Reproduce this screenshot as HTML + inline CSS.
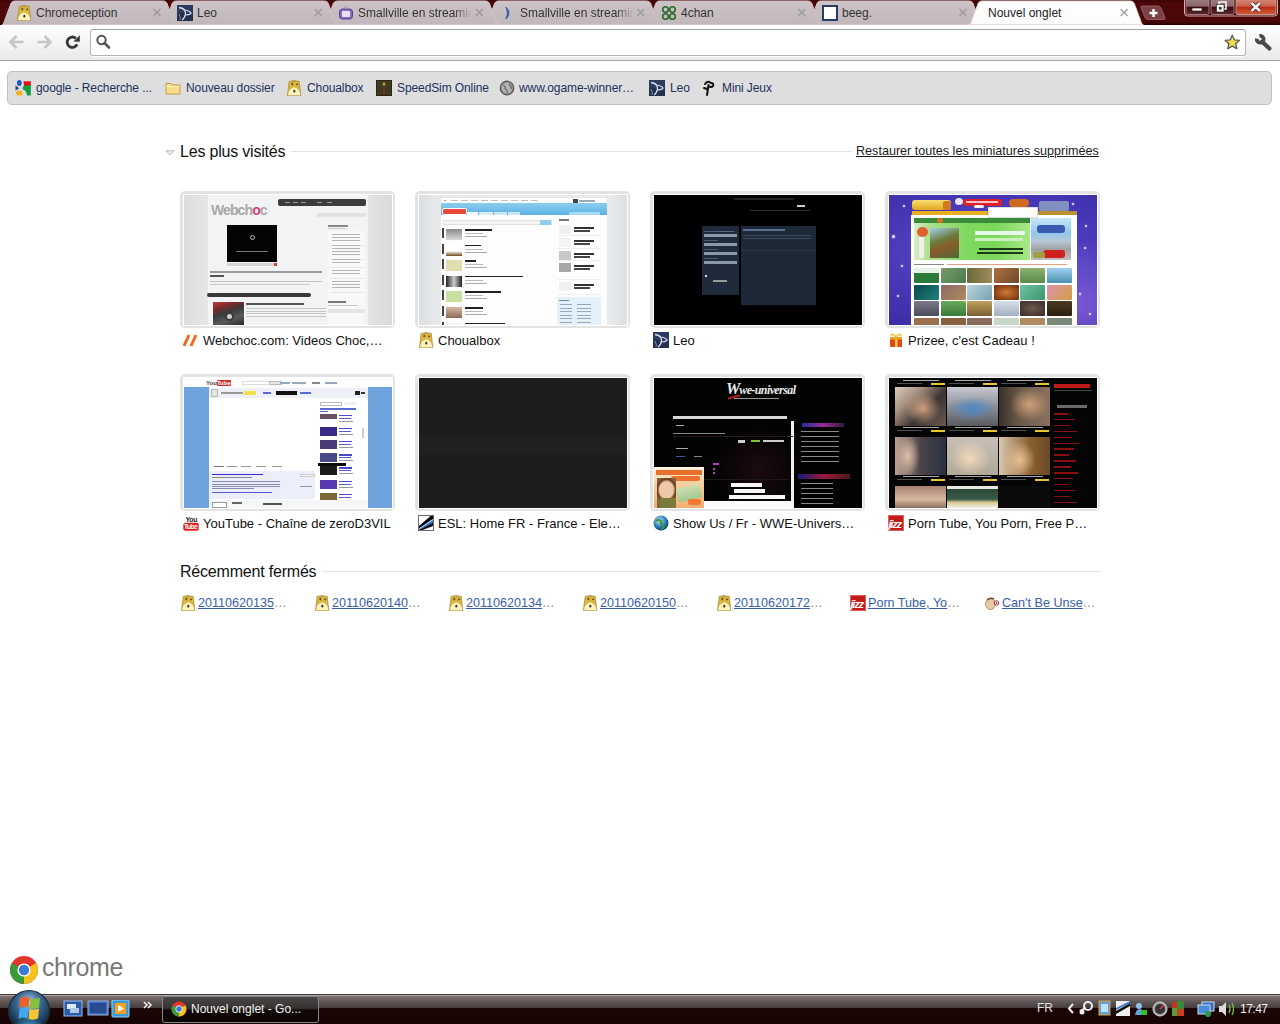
<!DOCTYPE html>
<html><head><meta charset="utf-8"><title>Nouvel onglet</title>
<style>
html,body{margin:0;padding:0;width:1280px;height:1024px;overflow:hidden;background:#fff;font-family:"Liberation Sans",sans-serif;position:relative}
div{box-sizing:border-box}
</style></head><body>
<svg style="position:absolute;left:0;top:0" width="1280" height="25">
<defs><linearGradient id="tg" x1="0" y1="0" x2="0" y2="1"><stop offset="0" stop-color="#cdc3c6"/><stop offset="1" stop-color="#c0b8bb"/></linearGradient><linearGradient id="ag" x1="0" y1="0" x2="0" y2="1"><stop offset="0" stop-color="#ffffff"/><stop offset="1" stop-color="#fbfbfb"/></linearGradient><linearGradient id="fg" x1="0" y1="0" x2="0" y2="1"><stop offset="0" stop-color="#3e0406"/><stop offset="0.15" stop-color="#4c0709"/><stop offset="0.85" stop-color="#4a0708"/><stop offset="1" stop-color="#2a0203"/></linearGradient></defs>
<rect x="0" y="0" width="1280" height="25" fill="url(#fg)"/>
<path d="M808.0,24.5 C809.5,24.5 810.0,22.5 810.6,20.5 L816.2,5.5 Q817.2,1.0 821.0,1.0 L969.0,1.0 Q972.8,1.0 973.8,5.5 L979.4,20.5 C980.0,22.5 980.5,24.5 982.0,24.5 Z" fill="url(#tg)" stroke="#d7c2c6" stroke-width="1"/>
<path d="M646.8,24.5 C648.3,24.5 648.8,22.5 649.4,20.5 L655.0,5.5 Q656.0,1.0 659.8,1.0 L807.8,1.0 Q811.6,1.0 812.6,5.5 L818.2,20.5 C818.8,22.5 819.3,24.5 820.8,24.5 Z" fill="url(#tg)" stroke="#d7c2c6" stroke-width="1"/>
<path d="M485.6,24.5 C487.1,24.5 487.6,22.5 488.2,20.5 L493.8,5.5 Q494.8,1.0 498.6,1.0 L646.6,1.0 Q650.4,1.0 651.4,5.5 L657.0,20.5 C657.6,22.5 658.1,24.5 659.6,24.5 Z" fill="url(#tg)" stroke="#d7c2c6" stroke-width="1"/>
<path d="M324.4,24.5 C325.9,24.5 326.4,22.5 327.0,20.5 L332.6,5.5 Q333.6,1.0 337.4,1.0 L485.4,1.0 Q489.2,1.0 490.2,5.5 L495.8,20.5 C496.4,22.5 496.9,24.5 498.4,24.5 Z" fill="url(#tg)" stroke="#d7c2c6" stroke-width="1"/>
<path d="M163.2,24.5 C164.7,24.5 165.2,22.5 165.8,20.5 L171.4,5.5 Q172.4,1.0 176.2,1.0 L324.2,1.0 Q328.0,1.0 329.0,5.5 L334.6,20.5 C335.2,22.5 335.7,24.5 337.2,24.5 Z" fill="url(#tg)" stroke="#d7c2c6" stroke-width="1"/>
<path d="M2.0,24.5 C3.5,24.5 4.0,22.5 4.6,20.5 L10.2,5.5 Q11.2,1.0 15.0,1.0 L163.0,1.0 Q166.8,1.0 167.8,5.5 L173.4,20.5 C174.0,22.5 174.5,24.5 176.0,24.5 Z" fill="url(#tg)" stroke="#d7c2c6" stroke-width="1"/>
<path d="M969.2,24.5 C970.7,24.5 971.2,22.5 971.8,20.5 L977.4,5.5 Q978.4,1.0 982.2,1.0 L1130.2,1.0 Q1134.0,1.0 1135.0,5.5 L1140.6,20.5 C1141.2,22.5 1141.7,24.5 1143.2,24.5 Z" fill="url(#ag)" stroke="#e8dcdc" stroke-width="1"/>
<path d="M1142,6 L1158,6 Q1160,6 1161,8 L1165,17.5 Q1165.5,19.5 1163.5,19.5 L1148,19.5 Q1146,19.5 1145,17.5 L1141,8 Q1140.5,6 1142,6 Z" fill="#7a4246" stroke="#9a6a6e" stroke-width="0.8"/>
<path d="M1153.5,9 V17 M1149.5,13 H1157.5" stroke="#fff" stroke-width="2.4"/>
<path d="M153.5,9.0 L160.5,16.0 M160.5,9.0 L153.5,16.0" stroke="#9c9c9c" stroke-width="1.6"/>
<path d="M314.7,9.0 L321.7,16.0 M321.7,9.0 L314.7,16.0" stroke="#9c9c9c" stroke-width="1.6"/>
<path d="M475.9,9.0 L482.9,16.0 M482.9,9.0 L475.9,16.0" stroke="#9c9c9c" stroke-width="1.6"/>
<path d="M637.0999999999999,9.0 L644.0999999999999,16.0 M644.0999999999999,9.0 L637.0999999999999,16.0" stroke="#9c9c9c" stroke-width="1.6"/>
<path d="M798.3,9.0 L805.3,16.0 M805.3,9.0 L798.3,16.0" stroke="#9c9c9c" stroke-width="1.6"/>
<path d="M959.5,9.0 L966.5,16.0 M966.5,9.0 L959.5,16.0" stroke="#9c9c9c" stroke-width="1.6"/>
<path d="M1120.6999999999998,9.0 L1127.6999999999998,16.0 M1127.6999999999998,9.0 L1120.6999999999998,16.0" stroke="#a8a8a8" stroke-width="1.6"/>
<rect x="1184.5" y="-3" width="93" height="19" rx="3" fill="#3a0506" stroke="#d9a9ac" stroke-width="1"/>
<defs><linearGradient id="wb" x1="0" y1="0" x2="0" y2="1"><stop offset="0" stop-color="#a08084"/><stop offset="0.5" stop-color="#8a6468"/><stop offset="0.55" stop-color="#3a0a0e"/><stop offset="1" stop-color="#5a2a2e"/></linearGradient><linearGradient id="wc" x1="0" y1="0" x2="0" y2="1"><stop offset="0" stop-color="#d89080"/><stop offset="0.5" stop-color="#c8604c"/><stop offset="0.55" stop-color="#b82a10"/><stop offset="1" stop-color="#d06040"/></linearGradient></defs>
<rect x="1186" y="-2" width="23" height="16.5" rx="1.5" fill="url(#wb)" stroke="#c09094" stroke-width="0.8"/>
<rect x="1211" y="-2" width="23" height="16.5" rx="1.5" fill="url(#wb)" stroke="#c09094" stroke-width="0.8"/>
<rect x="1236" y="-2" width="40" height="16.5" rx="1.5" fill="url(#wc)" stroke="#e0a8a0" stroke-width="0.8"/>
<rect x="1192" y="8" width="10" height="3" fill="#f4f0f0" stroke="#2a0a0a" stroke-width="0.6"/>
<rect x="1219" y="2" width="7" height="7" fill="none" stroke="#f0f0f0" stroke-width="1.6"/>
<rect x="1216.5" y="4.5" width="7.5" height="7.5" fill="#f4f4f4" stroke="#222" stroke-width="0.6"/><rect x="1219" y="7" width="2.6" height="2.6" fill="#333"/>
<path d="M1251.5,3 L1260,11 M1260,3 L1251.5,11" stroke="#3a1010" stroke-width="4"/><path d="M1251.5,3 L1260,11 M1260,3 L1251.5,11" stroke="#f6f6ff" stroke-width="2.6"/>
</svg>
<svg style="position:absolute;left:16px;top:5px;width:16px;height:16px" viewBox="0 0 16 16"><path d="M3.2,1.2 L13.2,1.2 L14.8,15.6 L1.4,15.6 Z" fill="#d8b440" stroke="#a88a30" stroke-width="0.7" stroke-linejoin="round"/><path d="M5.5,1.2 Q8,0 10.5,1.2" stroke="#a88a30" stroke-width="0.8" fill="none"/><path d="M2,15.2 Q2.5,8.5 8.2,7.2 Q14,8.5 14.4,15.2 Z" fill="#fbf2c0"/><ellipse cx="6.3" cy="4" rx="0.9" ry="1.2" fill="#6a4a10"/><ellipse cx="11.2" cy="4.3" rx="1" ry="0.9" fill="#6a4a10"/><ellipse cx="8.3" cy="11.2" rx="1" ry="1.4" fill="#3a3020"/></svg>
<div style="position:absolute;left:36px;top:5px;width:116px;height:16px;overflow:hidden;font-size:12px;line-height:16px;color:#333;white-space:nowrap;">Chromeception</div>
<svg style="position:absolute;left:177px;top:5px;width:16px;height:16px" viewBox="0 0 16 16"><rect width="16" height="16" fill="#2c3a5e"/><rect x="0" y="8" width="16" height="8" fill="#23304e"/><path d="M2,2.5 Q9,3.5 8.5,9 Q8,13 5,15" stroke="#d8e0f0" stroke-width="1.3" fill="none"/><path d="M8.5,5 Q14.5,6.5 14,8.5 Q12,10 8.5,10" stroke="#d8e0f0" stroke-width="1.2" fill="none"/><path d="M2,9 Q4,13 3,15" stroke="#8090b0" stroke-width="1" fill="none"/></svg>
<div style="position:absolute;left:197px;top:5px;width:116px;height:16px;overflow:hidden;font-size:12px;line-height:16px;color:#333;white-space:nowrap;">Leo</div>
<svg style="position:absolute;left:338px;top:5px;width:16px;height:16px" viewBox="0 0 16 16"><rect x="1.5" y="4" width="13" height="10" rx="3" fill="#8a6cc0" stroke="#5a3e90"/><rect x="4" y="6" width="8" height="6" rx="1" fill="#e8e0f4"/><path d="M6,1 L8,4 L10,1" stroke="#a090c0" fill="none"/></svg>
<div style="position:absolute;left:358px;top:5px;width:116px;height:16px;overflow:hidden;font-size:12px;line-height:16px;color:#333;white-space:nowrap;-webkit-mask-image:linear-gradient(90deg,#000 0,#000 calc(100% - 20px),rgba(0,0,0,0) calc(100% - 2px));">Smallville en streaming</div>
<svg style="position:absolute;left:500px;top:5px;width:16px;height:16px" viewBox="0 0 16 16"><path d="M6,2 Q12,8 6,14 Q9,8 6,2 Z" fill="#3a6ac8" stroke="#2a4a98" stroke-width="0.8"/></svg>
<div style="position:absolute;left:520px;top:5px;width:116px;height:16px;overflow:hidden;font-size:12px;line-height:16px;color:#333;white-space:nowrap;-webkit-mask-image:linear-gradient(90deg,#000 0,#000 calc(100% - 20px),rgba(0,0,0,0) calc(100% - 2px));">Smallville en streaming</div>
<svg style="position:absolute;left:661px;top:5px;width:16px;height:16px" viewBox="0 0 16 16"><g fill="none" stroke="#2a6a2a" stroke-width="1.6"><circle cx="4.5" cy="4.5" r="2.8"/><circle cx="11.5" cy="4.5" r="2.8"/><circle cx="4.5" cy="11.5" r="2.8"/><circle cx="11.5" cy="11.5" r="2.8"/></g></svg>
<div style="position:absolute;left:681px;top:5px;width:116px;height:16px;overflow:hidden;font-size:12px;line-height:16px;color:#333;white-space:nowrap;">4chan</div>
<svg style="position:absolute;left:822px;top:5px;width:16px;height:16px" viewBox="0 0 16 16"><rect x="1" y="1" width="14" height="14" fill="#fff" stroke="#2a3a6a" stroke-width="2"/></svg>
<div style="position:absolute;left:842px;top:5px;width:116px;height:16px;overflow:hidden;font-size:12px;line-height:16px;color:#333;white-space:nowrap;">beeg.</div>
<div style="position:absolute;left:988px;top:5px;width:131px;height:16px;overflow:hidden;font-size:12px;line-height:16px;color:#222;white-space:nowrap;">Nouvel onglet</div>
<div style="position:absolute;left:0;top:25px;width:1280px;height:36px;background:linear-gradient(#ffffff,#f7f7f7 40%,#e9e9e9);border-bottom:1px solid #a6a6a6"></div>
<div style="position:absolute;left:90px;top:29px;width:1156px;height:27px;background:#fff;border:1px solid #b4b4b4;border-top-color:#a0a0a0;border-radius:3px;box-shadow:0 1px 0 rgba(255,255,255,.8)"></div>
<svg style="position:absolute;left:0;top:25px" width="130" height="36"><path d="M23.5,17 H11 M16.5,11 L10.5,17 L16.5,23" stroke="#c6c6c6" stroke-width="2.6" fill="none" stroke-linejoin="miter"/><path d="M37.5,17 H50 M44.5,11 L50.5,17 L44.5,23" stroke="#c6c6c6" stroke-width="2.6" fill="none"/><path d="M77.1,19.4 A5.2,5.2 0 1 1 75.9,13.4" stroke="#383838" stroke-width="2.8" fill="none"/><path d="M79.8,10.3 L79.8,16.7 L73.4,16.6 Z" fill="#383838"/><circle cx="101.5" cy="15" r="4.2" stroke="#555" stroke-width="2" fill="none"/><path d="M104.5,18 L109,22.5" stroke="#555" stroke-width="2.6" stroke-linecap="round"/></svg>
<svg style="position:absolute;left:1222px;top:32px" width="20" height="20" viewBox="0 0 20 20"><g transform="translate(10.3,10.4) scale(0.88) translate(-10,-10)"><path d="M10,1.8 L12.4,7.2 L18.2,7.6 L13.8,11.4 L15.2,17.2 L10,14.2 L4.8,17.2 L6.2,11.4 L1.8,7.6 L7.6,7.2 Z" fill="#f0dc50" stroke="#5a5a5a" stroke-width="1.5" stroke-linejoin="round"/></g></svg>
<svg style="position:absolute;left:1253px;top:32px" width="20" height="20" viewBox="0 0 20 20"><path d="M9.2,9.7 L16.4,16.6" stroke="#4a4a4a" stroke-width="4.2" stroke-linecap="round"/><path d="M6.4,4.0 A3.4,3.4 0 1 1 3.9,6.6" stroke="#4a4a4a" stroke-width="3.8" fill="none"/></svg>
<div style="position:absolute;left:7px;top:71px;width:1265px;height:34px;background:#dedede;border:1px solid #c0c0c0;border-radius:5px"></div>
<svg style="position:absolute;left:15px;top:80px;width:16px;height:16px" viewBox="0 0 16 16"><ellipse cx="4.3" cy="3.1" rx="2.4" ry="3" fill="#1a5ac8"/><path d="M8.5,1.3 H15.8 V6 H9 Z" fill="#e01414"/><path d="M9,5.6 H15.8 V15.6 H12.2 Q11.4,12.5 10.4,10.8 Q7.2,9.6 7.6,8 Q8.2,6.6 9,5.6 Z" fill="#10a040"/><path d="M0.5,5.6 L4.2,8.2 L0.5,10.4 Z" fill="#2a3a7a"/><ellipse cx="4.3" cy="13" rx="3.4" ry="2.6" fill="#f0b020"/></svg>
<div style="position:absolute;left:36px;top:81px;font-size:12px;line-height:14px;color:#22305c;white-space:nowrap;letter-spacing:-0.1px">google - Recherche ...</div>
<svg style="position:absolute;left:165px;top:80px;width:16px;height:16px" viewBox="0 0 16 16"><path d="M1,3.5 L6,3.5 L7,5 L15,5 L15,14 L1,14 Z" fill="#f6dc8c" stroke="#b89440" stroke-width="0.9"/><path d="M1.5,6.5 L14.5,6.5" stroke="#fff2c0"/></svg>
<div style="position:absolute;left:186px;top:81px;font-size:12px;line-height:14px;color:#22305c;white-space:nowrap;letter-spacing:-0.1px">Nouveau dossier</div>
<svg style="position:absolute;left:286px;top:80px;width:16px;height:16px" viewBox="0 0 16 16"><path d="M3.2,1.2 L13.2,1.2 L14.8,15.6 L1.4,15.6 Z" fill="#d8b440" stroke="#a88a30" stroke-width="0.7" stroke-linejoin="round"/><path d="M5.5,1.2 Q8,0 10.5,1.2" stroke="#a88a30" stroke-width="0.8" fill="none"/><path d="M2,15.2 Q2.5,8.5 8.2,7.2 Q14,8.5 14.4,15.2 Z" fill="#fbf2c0"/><ellipse cx="6.3" cy="4" rx="0.9" ry="1.2" fill="#6a4a10"/><ellipse cx="11.2" cy="4.3" rx="1" ry="0.9" fill="#6a4a10"/><ellipse cx="8.3" cy="11.2" rx="1" ry="1.4" fill="#3a3020"/></svg>
<div style="position:absolute;left:307px;top:81px;font-size:12px;line-height:14px;color:#22305c;white-space:nowrap;letter-spacing:-0.1px">Choualbox</div>
<svg style="position:absolute;left:376px;top:80px;width:16px;height:16px" viewBox="0 0 16 16"><rect width="16" height="16" fill="#2a2418"/><rect x="1" y="1" width="14" height="14" fill="#3e3a20"/><path d="M8,3 L9,14 L7,14 Z" fill="#9a2a1a"/><circle cx="8" cy="4" r="1.5" fill="#c8a040"/></svg>
<div style="position:absolute;left:397px;top:81px;font-size:12px;line-height:14px;color:#22305c;white-space:nowrap;letter-spacing:-0.1px">SpeedSim Online</div>
<svg style="position:absolute;left:499px;top:80px;width:16px;height:16px" viewBox="0 0 16 16"><circle cx="8" cy="8" r="6.8" fill="#8c8c8c" stroke="#5a5a5a" stroke-width="1.2"/><circle cx="8" cy="8" r="5.2" fill="#b4b4b4"/><path d="M4,5 Q7,6 6,9 Q9,10 8,13 M10,3.5 Q12,6 12.5,9" stroke="#6a6a6a" stroke-width="1.3" fill="none"/></svg>
<div style="position:absolute;left:519px;top:81px;font-size:12px;line-height:14px;color:#22305c;white-space:nowrap;letter-spacing:-0.1px">www.ogame-winner…</div>
<svg style="position:absolute;left:649px;top:80px;width:16px;height:16px" viewBox="0 0 16 16"><rect width="16" height="16" fill="#2c3a5e"/><rect x="0" y="8" width="16" height="8" fill="#23304e"/><path d="M2,2.5 Q9,3.5 8.5,9 Q8,13 5,15" stroke="#d8e0f0" stroke-width="1.3" fill="none"/><path d="M8.5,5 Q14.5,6.5 14,8.5 Q12,10 8.5,10" stroke="#d8e0f0" stroke-width="1.2" fill="none"/><path d="M2,9 Q4,13 3,15" stroke="#8090b0" stroke-width="1" fill="none"/></svg>
<div style="position:absolute;left:670px;top:81px;font-size:12px;line-height:14px;color:#22305c;white-space:nowrap;letter-spacing:-0.1px">Leo</div>
<svg style="position:absolute;left:701px;top:80px;width:16px;height:16px" viewBox="0 0 16 16"><path d="M6,15 L7.5,5 M4,4 Q7,0 10,3 Q13,3 12,6 Q10,8 7.5,6 M3,8 L6,9" stroke="#111" stroke-width="2" fill="none" stroke-linecap="round"/></svg>
<div style="position:absolute;left:722px;top:81px;font-size:12px;line-height:14px;color:#22305c;white-space:nowrap;letter-spacing:-0.1px">Mini Jeux</div>
<svg style="position:absolute;left:164px;top:149px" width="12" height="8"><path d="M2,1.8 L10,1.8 L6,5.8 Z" fill="#ededed" stroke="#b8b8b8" stroke-width="1" stroke-linejoin="round"/></svg>
<div style="position:absolute;left:180px;top:143px;font-size:16px;line-height:18px;color:#111;white-space:nowrap;letter-spacing:-0.2px">Les plus visités</div>
<div style="position:absolute;left:291px;top:151px;width:561px;height:1px;background:#e2e2e2"></div>
<div style="position:absolute;left:856px;top:144px;font-size:12.6px;line-height:14px;color:#1a1a1a;text-decoration:underline;white-space:nowrap">Restaurer toutes les miniatures supprimées</div>
<div style="position:absolute;left:180px;top:191px;width:215px;height:137px;border-radius:5px;background:#e3e3e3"></div>
<div style="position:absolute;left:183px;top:194px;width:210px;height:132px;background:#fff"></div>
<div style="position:absolute;left:184px;top:195px;width:208px;height:130px;overflow:hidden"><div style="position:absolute;left:0px;top:0px;width:208px;height:130px;background:linear-gradient(90deg,#dadcde,#e4e6e8 11%,#e9ebed 14%,#e9ebed 86%,#e0e2e4 90%,#d8dadc);"></div><div style="position:absolute;left:24px;top:0px;width:160px;height:130px;background:#f2f3f4;"></div><div style="position:absolute;left:94px;top:4px;width:88px;height:7px;background:#3c3c3c;border-radius:2px"></div><div style="position:absolute;left:101px;top:7px;width:5px;height:1px;background:#9a9a9a;"></div><div style="position:absolute;left:109px;top:7px;width:5px;height:1px;background:#9a9a9a;"></div><div style="position:absolute;left:117px;top:7px;width:5px;height:1px;background:#9a9a9a;"></div><div style="position:absolute;left:133px;top:7px;width:5px;height:1px;background:#9a9a9a;"></div><div style="position:absolute;left:143px;top:7px;width:5px;height:1px;background:#9a9a9a;"></div><div style="position:absolute;left:27px;top:8px;font:bold 14px/15px 'Liberation Sans';color:#a8a8a8;letter-spacing:-0.9px">Webch<span style="color:#d8407a">o</span>c</div><div style="position:absolute;left:133px;top:18px;width:49px;height:4px;background:#e2e2e2;"></div><div style="position:absolute;left:43px;top:30px;width:50px;height:37px;background:#040404;"></div><div style="position:absolute;left:66px;top:40px;width:5px;height:5px;background:transparent;border:1px solid #bbb;border-radius:50%"></div><div style="position:absolute;left:52px;top:56px;width:32px;height:1px;background:#777;"></div><div style="position:absolute;left:43px;top:67.5px;width:50px;height:3px;background:#d4d4d4;"></div><div style="position:absolute;left:90px;top:67.5px;width:3px;height:3px;background:#d04040;"></div><div style="position:absolute;left:26px;top:76px;width:112px;height:1.5px;background:#9a9a9a;"></div><div style="position:absolute;left:26px;top:80px;width:14px;height:1.5px;background:#555;"></div><div style="position:absolute;left:26px;top:86px;width:112px;height:1px;background:#c4c4c4;"></div><div style="position:absolute;left:26px;top:89px;width:100px;height:1px;background:#c8c8c8;"></div><div style="position:absolute;left:23px;top:97.5px;width:104px;height:4.5px;background:#383838;border-radius:2px"></div><div style="position:absolute;left:29px;top:107px;width:31px;height:23px;background:linear-gradient(160deg,#c03a3a 0,#7a2a2a 25%,#3a3a3a 45%,#5a5a5a 70%,#2a2a2a);"></div><div style="position:absolute;left:41px;top:117px;width:9px;height:9px;background:#d0d0d0;border-radius:50%;border:2px solid #3a3a3a"></div><div style="position:absolute;left:62px;top:108px;width:58px;height:2px;background:#555;"></div><div style="position:absolute;left:62px;top:113.0px;width:80px;height:1px;background:#c6c6c6;"></div><div style="position:absolute;left:62px;top:115.5px;width:80px;height:1px;background:#c6c6c6;"></div><div style="position:absolute;left:62px;top:118.0px;width:80px;height:1px;background:#c6c6c6;"></div><div style="position:absolute;left:62px;top:120.5px;width:80px;height:1px;background:#c6c6c6;"></div><div style="position:absolute;left:144px;top:30px;width:20px;height:2px;background:#8a8a8a;"></div><div style="position:absolute;left:144px;top:33px;width:18px;height:1px;background:#c8c8c8;"></div><div style="position:absolute;left:144px;top:36px;width:37px;height:94px;background:#f8f8f8;"></div><div style="position:absolute;left:148px;top:39px;width:28px;height:1px;background:#b4b4b4;"></div><div style="position:absolute;left:148px;top:42px;width:28px;height:1px;background:#b4b4b4;"></div><div style="position:absolute;left:148px;top:45px;width:28px;height:1px;background:#b4b4b4;"></div><div style="position:absolute;left:146px;top:50px;width:34px;height:1px;background:#e6e6e6;"></div><div style="position:absolute;left:148px;top:50px;width:28px;height:1px;background:#b4b4b4;"></div><div style="position:absolute;left:148px;top:53px;width:28px;height:1px;background:#b4b4b4;"></div><div style="position:absolute;left:148px;top:56px;width:28px;height:1px;background:#b4b4b4;"></div><div style="position:absolute;left:148px;top:59px;width:28px;height:1px;background:#b4b4b4;"></div><div style="position:absolute;left:146px;top:64px;width:34px;height:1px;background:#e6e6e6;"></div><div style="position:absolute;left:148px;top:64px;width:28px;height:1px;background:#b4b4b4;"></div><div style="position:absolute;left:148px;top:67px;width:28px;height:1px;background:#b4b4b4;"></div><div style="position:absolute;left:146px;top:72px;width:34px;height:1px;background:#e6e6e6;"></div><div style="position:absolute;left:148px;top:75px;width:28px;height:1px;background:#b4b4b4;"></div><div style="position:absolute;left:148px;top:78px;width:28px;height:1px;background:#b4b4b4;"></div><div style="position:absolute;left:146px;top:83px;width:34px;height:1px;background:#e6e6e6;"></div><div style="position:absolute;left:148px;top:86px;width:28px;height:1px;background:#b4b4b4;"></div><div style="position:absolute;left:148px;top:89px;width:28px;height:1px;background:#b4b4b4;"></div><div style="position:absolute;left:148px;top:92px;width:28px;height:1px;background:#b4b4b4;"></div><div style="position:absolute;left:146px;top:97px;width:34px;height:1px;background:#e6e6e6;"></div><div style="position:absolute;left:144px;top:106px;width:18px;height:2px;background:#777;"></div><div style="position:absolute;left:144px;top:110px;width:30px;height:1px;background:#c8c8c8;"></div><div style="position:absolute;left:144px;top:114px;width:37px;height:4px;background:#e4e4e4;"></div></div>
<svg style="position:absolute;left:183px;top:332px;width:16px;height:16px" viewBox="0 0 16 16"><path d="M1,14 L6,3 M8,14 L13,3" stroke="#ee6a20" stroke-width="3"/></svg>
<div style="position:absolute;left:203px;top:333px;font-size:13px;line-height:15px;color:#111;white-space:nowrap">Webchoc.com: Videos Choc,…</div>
<div style="position:absolute;left:415px;top:191px;width:215px;height:137px;border-radius:5px;background:#e3e3e3"></div>
<div style="position:absolute;left:418px;top:194px;width:210px;height:132px;background:#fff"></div>
<div style="position:absolute;left:419px;top:195px;width:208px;height:130px;overflow:hidden"><div style="position:absolute;left:0px;top:0px;width:208px;height:130px;background:linear-gradient(90deg,#dcdfe2,#e6e8ea 8%,#e8eaec 92%,#dcdfe2);"></div><div style="position:absolute;left:22px;top:3px;width:166px;height:127px;background:#fdfdfd;"></div><div style="position:absolute;left:25px;top:5px;width:2px;height:1px;background:#999;"></div><div style="position:absolute;left:32px;top:5px;width:7px;height:1px;background:#c0c0c0;"></div><div style="position:absolute;left:42px;top:5px;width:7px;height:1px;background:#c0c0c0;"></div><div style="position:absolute;left:52px;top:5px;width:7px;height:1px;background:#c0c0c0;"></div><div style="position:absolute;left:62px;top:5px;width:7px;height:1px;background:#c0c0c0;"></div><div style="position:absolute;left:72px;top:5px;width:7px;height:1px;background:#c0c0c0;"></div><div style="position:absolute;left:82px;top:5px;width:7px;height:1px;background:#c0c0c0;"></div><div style="position:absolute;left:92px;top:5px;width:7px;height:1px;background:#c0c0c0;"></div><div style="position:absolute;left:102px;top:5px;width:7px;height:1px;background:#c0c0c0;"></div><div style="position:absolute;left:112px;top:5px;width:7px;height:1px;background:#c0c0c0;"></div><div style="position:absolute;left:154px;top:4px;width:5px;height:4px;background:#444;"></div><div style="position:absolute;left:160px;top:5px;width:16px;height:2px;background:#9ab;"></div><div style="position:absolute;left:22px;top:8px;width:166px;height:12px;background:linear-gradient(#8ccef0,#5ab0e4);"></div><div style="position:absolute;left:23px;top:13px;width:25px;height:7px;background:#e84a3a;border-radius:2px;border:1px solid #fff"></div><div style="position:absolute;left:48px;top:17px;width:11px;height:3px;background:#f4f8fb;"></div><div style="position:absolute;left:60px;top:17px;width:14px;height:3px;background:#dcecf6;"></div><div style="position:absolute;left:75px;top:17px;width:13px;height:3px;background:#cde6f4;"></div><div style="position:absolute;left:89px;top:17px;width:12px;height:3px;background:#cde6f4;"></div><div style="position:absolute;left:150px;top:17px;width:31px;height:3px;background:#a8d8f2;"></div><div style="position:absolute;left:24px;top:25px;width:109px;height:5px;background:#f4f4f4;border:1px solid #e0e0e0"></div><div style="position:absolute;left:121px;top:25px;width:11px;height:5px;background:#8ecdee;"></div><div style="position:absolute;left:23px;top:33.0px;width:1.5px;height:10px;background:#444;"></div><div style="position:absolute;left:27px;top:34.0px;width:16px;height:11px;background:linear-gradient(#8a8a8a,#d8d8d8);"></div><div style="position:absolute;left:46px;top:34.0px;width:27px;height:1.5px;background:#222;"></div><div style="position:absolute;left:46px;top:38.0px;width:18px;height:1px;background:#bbb;"></div><div style="position:absolute;left:46px;top:41.0px;width:22px;height:1px;background:#aaa;"></div><div style="position:absolute;left:23px;top:48.6px;width:1.5px;height:10px;background:#444;"></div><div style="position:absolute;left:27px;top:49.6px;width:16px;height:11px;background:linear-gradient(#fff 55%,#6a4a1a);"></div><div style="position:absolute;left:46px;top:49.6px;width:16px;height:1.5px;background:#222;"></div><div style="position:absolute;left:46px;top:53.6px;width:18px;height:1px;background:#bbb;"></div><div style="position:absolute;left:46px;top:56.6px;width:22px;height:1px;background:#aaa;"></div><div style="position:absolute;left:23px;top:64.2px;width:1.5px;height:10px;background:#444;"></div><div style="position:absolute;left:27px;top:65.2px;width:16px;height:11px;background:#e0deb0;"></div><div style="position:absolute;left:46px;top:65.2px;width:11px;height:1.5px;background:#222;"></div><div style="position:absolute;left:46px;top:69.2px;width:18px;height:1px;background:#bbb;"></div><div style="position:absolute;left:46px;top:72.2px;width:22px;height:1px;background:#aaa;"></div><div style="position:absolute;left:23px;top:79.8px;width:1.5px;height:10px;background:#444;"></div><div style="position:absolute;left:27px;top:80.8px;width:16px;height:11px;background:linear-gradient(90deg,#222,#ccc 50%,#222);"></div><div style="position:absolute;left:46px;top:80.8px;width:58px;height:1.5px;background:#222;"></div><div style="position:absolute;left:46px;top:84.8px;width:18px;height:1px;background:#bbb;"></div><div style="position:absolute;left:46px;top:87.8px;width:22px;height:1px;background:#aaa;"></div><div style="position:absolute;left:23px;top:95.4px;width:1.5px;height:10px;background:#444;"></div><div style="position:absolute;left:27px;top:96.4px;width:16px;height:11px;background:#c8e0a0;"></div><div style="position:absolute;left:46px;top:96.4px;width:36px;height:1.5px;background:#222;"></div><div style="position:absolute;left:46px;top:100.4px;width:18px;height:1px;background:#bbb;"></div><div style="position:absolute;left:46px;top:103.4px;width:22px;height:1px;background:#aaa;"></div><div style="position:absolute;left:23px;top:111.0px;width:1.5px;height:10px;background:#444;"></div><div style="position:absolute;left:27px;top:112.0px;width:16px;height:11px;background:linear-gradient(#d8b8a0,#8a6a5a);"></div><div style="position:absolute;left:46px;top:112.0px;width:18px;height:1.5px;background:#222;"></div><div style="position:absolute;left:46px;top:116.0px;width:18px;height:1px;background:#bbb;"></div><div style="position:absolute;left:46px;top:119.0px;width:22px;height:1px;background:#aaa;"></div><div style="position:absolute;left:23px;top:126.6px;width:1.5px;height:10px;background:#444;"></div><div style="position:absolute;left:27px;top:127.6px;width:16px;height:11px;background:#f4f4f4;"></div><div style="position:absolute;left:46px;top:127.6px;width:40px;height:1.5px;background:#222;"></div><div style="position:absolute;left:46px;top:131.6px;width:18px;height:1px;background:#bbb;"></div><div style="position:absolute;left:46px;top:134.6px;width:22px;height:1px;background:#aaa;"></div><div style="position:absolute;left:140px;top:24px;width:10px;height:1.5px;background:#777;"></div><div style="position:absolute;left:139px;top:28px;width:42px;height:13px;background:#fff;border-bottom:1px solid #eee"></div><div style="position:absolute;left:140px;top:30px;width:12px;height:9px;background:#f0f0f0;"></div><div style="position:absolute;left:155px;top:32px;width:20px;height:1.5px;background:#333;"></div><div style="position:absolute;left:155px;top:35px;width:16px;height:1.5px;background:#444;"></div><div style="position:absolute;left:139px;top:41px;width:42px;height:13px;background:#fff;border-bottom:1px solid #eee"></div><div style="position:absolute;left:140px;top:43px;width:12px;height:9px;background:#f4f4f4;"></div><div style="position:absolute;left:155px;top:45px;width:20px;height:1.5px;background:#333;"></div><div style="position:absolute;left:155px;top:48px;width:16px;height:1.5px;background:#444;"></div><div style="position:absolute;left:139px;top:54px;width:42px;height:12px;background:#fff;border-bottom:1px solid #eee"></div><div style="position:absolute;left:140px;top:56px;width:12px;height:9px;background:#c8c8c8;"></div><div style="position:absolute;left:155px;top:58px;width:20px;height:1.5px;background:#333;"></div><div style="position:absolute;left:155px;top:61px;width:16px;height:1.5px;background:#444;"></div><div style="position:absolute;left:139px;top:66px;width:42px;height:19px;background:#fff;border-bottom:1px solid #eee"></div><div style="position:absolute;left:140px;top:68px;width:12px;height:9px;background:#a8a8a8;"></div><div style="position:absolute;left:155px;top:70px;width:20px;height:1.5px;background:#333;"></div><div style="position:absolute;left:155px;top:73px;width:16px;height:1.5px;background:#444;"></div><div style="position:absolute;left:139px;top:85px;width:42px;height:15px;background:#fff;border-bottom:1px solid #eee"></div><div style="position:absolute;left:140px;top:87px;width:12px;height:9px;background:#f0f0f0;"></div><div style="position:absolute;left:155px;top:89px;width:20px;height:1.5px;background:#333;"></div><div style="position:absolute;left:155px;top:92px;width:16px;height:1.5px;background:#444;"></div><div style="position:absolute;left:138px;top:102px;width:44px;height:28px;background:#e4f0fa;"></div><div style="position:absolute;left:140px;top:105px;width:10px;height:1px;background:#789;"></div><div style="position:absolute;left:141px;top:109.0px;width:12px;height:1px;background:#97aabb;"></div><div style="position:absolute;left:141px;top:112.5px;width:12px;height:1px;background:#97aabb;"></div><div style="position:absolute;left:141px;top:116.0px;width:12px;height:1px;background:#97aabb;"></div><div style="position:absolute;left:141px;top:119.5px;width:12px;height:1px;background:#97aabb;"></div><div style="position:absolute;left:141px;top:123.0px;width:12px;height:1px;background:#97aabb;"></div><div style="position:absolute;left:141px;top:126.5px;width:12px;height:1px;background:#97aabb;"></div><div style="position:absolute;left:158px;top:109.0px;width:14px;height:1px;background:#97aabb;"></div><div style="position:absolute;left:158px;top:112.5px;width:14px;height:1px;background:#97aabb;"></div><div style="position:absolute;left:158px;top:116.0px;width:14px;height:1px;background:#97aabb;"></div><div style="position:absolute;left:158px;top:119.5px;width:14px;height:1px;background:#97aabb;"></div><div style="position:absolute;left:158px;top:123.0px;width:14px;height:1px;background:#97aabb;"></div><div style="position:absolute;left:158px;top:126.5px;width:14px;height:1px;background:#97aabb;"></div></div>
<svg style="position:absolute;left:418px;top:332px;width:16px;height:16px" viewBox="0 0 16 16"><path d="M3.2,1.2 L13.2,1.2 L14.8,15.6 L1.4,15.6 Z" fill="#d8b440" stroke="#a88a30" stroke-width="0.7" stroke-linejoin="round"/><path d="M5.5,1.2 Q8,0 10.5,1.2" stroke="#a88a30" stroke-width="0.8" fill="none"/><path d="M2,15.2 Q2.5,8.5 8.2,7.2 Q14,8.5 14.4,15.2 Z" fill="#fbf2c0"/><ellipse cx="6.3" cy="4" rx="0.9" ry="1.2" fill="#6a4a10"/><ellipse cx="11.2" cy="4.3" rx="1" ry="0.9" fill="#6a4a10"/><ellipse cx="8.3" cy="11.2" rx="1" ry="1.4" fill="#3a3020"/></svg>
<div style="position:absolute;left:438px;top:333px;font-size:13px;line-height:15px;color:#111;white-space:nowrap">Choualbox</div>
<div style="position:absolute;left:650px;top:191px;width:215px;height:137px;border-radius:5px;background:#e3e3e3"></div>
<div style="position:absolute;left:653px;top:194px;width:210px;height:132px;background:#fff"></div>
<div style="position:absolute;left:654px;top:195px;width:208px;height:130px;overflow:hidden"><div style="position:absolute;left:0px;top:0px;width:208px;height:130px;background:#000;"></div><div style="position:absolute;left:80px;top:3px;width:60px;height:2px;background:#222;"></div><div style="position:absolute;left:143px;top:10px;width:8px;height:2px;background:#ccc;"></div><div style="position:absolute;left:96px;top:15px;width:60px;height:1px;background:#333;"></div><div style="position:absolute;left:48px;top:31px;width:37px;height:69px;background:#1f2b3a;"></div><div style="position:absolute;left:87px;top:31px;width:75px;height:79px;background:#1d2937;"></div><div style="position:absolute;left:50px;top:36px;width:30px;height:1px;background:#5a6a80;"></div><div style="position:absolute;left:50px;top:39px;width:33px;height:3px;background:#8a98a8;"></div><div style="position:absolute;left:50px;top:36px;width:14px;height:1px;background:#4a5a70;"></div><div style="position:absolute;left:50px;top:48px;width:33px;height:3px;background:#8a98a8;"></div><div style="position:absolute;left:50px;top:45px;width:14px;height:1px;background:#4a5a70;"></div><div style="position:absolute;left:50px;top:57px;width:33px;height:3px;background:#8a98a8;"></div><div style="position:absolute;left:50px;top:54px;width:14px;height:1px;background:#4a5a70;"></div><div style="position:absolute;left:50px;top:66px;width:33px;height:3px;background:#8a98a8;"></div><div style="position:absolute;left:50px;top:63px;width:14px;height:1px;background:#4a5a70;"></div><div style="position:absolute;left:51px;top:80px;width:2px;height:2px;background:#ddd;"></div><div style="position:absolute;left:59px;top:85px;width:14px;height:2px;background:#999;"></div><div style="position:absolute;left:89px;top:34px;width:42px;height:2px;background:#5a7090;"></div><div style="position:absolute;left:89px;top:40px;width:68px;height:1px;background:#3a4a60;"></div><div style="position:absolute;left:89px;top:43px;width:68px;height:1px;background:#3a4a60;"></div><div style="position:absolute;left:88px;top:55px;width:73px;height:1px;background:#2a3848;"></div></div>
<svg style="position:absolute;left:653px;top:332px;width:16px;height:16px" viewBox="0 0 16 16"><rect width="16" height="16" fill="#2c3a5e"/><rect x="0" y="8" width="16" height="8" fill="#23304e"/><path d="M2,2.5 Q9,3.5 8.5,9 Q8,13 5,15" stroke="#d8e0f0" stroke-width="1.3" fill="none"/><path d="M8.5,5 Q14.5,6.5 14,8.5 Q12,10 8.5,10" stroke="#d8e0f0" stroke-width="1.2" fill="none"/><path d="M2,9 Q4,13 3,15" stroke="#8090b0" stroke-width="1" fill="none"/></svg>
<div style="position:absolute;left:673px;top:333px;font-size:13px;line-height:15px;color:#111;white-space:nowrap">Leo</div>
<div style="position:absolute;left:885px;top:191px;width:215px;height:137px;border-radius:5px;background:#e3e3e3"></div>
<div style="position:absolute;left:888px;top:194px;width:210px;height:132px;background:#fff"></div>
<div style="position:absolute;left:889px;top:195px;width:208px;height:130px;overflow:hidden"><div style="position:absolute;left:0px;top:0px;width:208px;height:130px;background:radial-gradient(ellipse 60% 50% at 85% 85%,rgba(150,110,230,0.7),rgba(150,110,230,0) 100%),radial-gradient(ellipse 120% 90% at 50% 45%,#6454d0,#4838b8 45%,#3a2ca4 75%,#30228c);"></div><div style="position:absolute;left:3px;top:40px;width:3px;height:3px;background:#f0e8ff;border-radius:50%;box-shadow:0 0 2px #c8c0ff"></div><div style="position:absolute;left:12px;top:70px;width:2px;height:2px;background:#f0e8ff;border-radius:50%;box-shadow:0 0 2px #c8c0ff"></div><div style="position:absolute;left:195px;top:52px;width:2px;height:2px;background:#f0e8ff;border-radius:50%;box-shadow:0 0 2px #c8c0ff"></div><div style="position:absolute;left:190px;top:98px;width:2px;height:2px;background:#f0e8ff;border-radius:50%;box-shadow:0 0 2px #c8c0ff"></div><div style="position:absolute;left:183px;top:8px;width:2px;height:2px;background:#f0e8ff;border-radius:50%;box-shadow:0 0 2px #c8c0ff"></div><div style="position:absolute;left:200px;top:118px;width:2px;height:2px;background:#f0e8ff;border-radius:50%;box-shadow:0 0 2px #c8c0ff"></div><div style="position:absolute;left:8px;top:100px;width:2px;height:2px;background:#f0e8ff;border-radius:50%;box-shadow:0 0 2px #c8c0ff"></div><div style="position:absolute;left:172px;top:80px;width:2px;height:2px;background:#f0e8ff;border-radius:50%;box-shadow:0 0 2px #c8c0ff"></div><div style="position:absolute;left:14px;top:10px;width:2px;height:2px;background:#f0e8ff;border-radius:50%;box-shadow:0 0 2px #c8c0ff"></div><div style="position:absolute;left:196px;top:30px;width:2px;height:2px;background:#f0e8ff;border-radius:50%;box-shadow:0 0 2px #c8c0ff"></div><div style="position:absolute;left:22px;top:20px;width:166px;height:110px;background:#fff;"></div><div style="position:absolute;left:23px;top:5px;width:39px;height:10px;background:linear-gradient(#f8e070,#e0a820);border-radius:3px"></div><div style="position:absolute;left:54px;top:6px;width:8px;height:9px;background:#d07820;border-radius:2px"></div><div style="position:absolute;left:23px;top:16px;width:75px;height:4px;background:#e8b020;"></div><div style="position:absolute;left:98px;top:16px;width:90px;height:4px;background:#b89030;"></div><div style="position:absolute;left:66px;top:3px;width:8px;height:7px;background:#e8e8f8;border-radius:50%"></div><div style="position:absolute;left:74px;top:4px;width:39px;height:6.5px;background:#e02028;border-radius:3px"></div><div style="position:absolute;left:77px;top:6px;width:32px;height:2px;background:#ffc0c0;"></div><div style="position:absolute;left:85px;top:10px;width:10px;height:3px;background:#f0f0f0;border-radius:2px"></div><div style="position:absolute;left:120px;top:4px;width:20px;height:8px;background:#d06a20;border-radius:4px"></div><div style="position:absolute;left:150px;top:6px;width:30px;height:10px;background:#8090c0;border-radius:2px"></div><div style="position:absolute;left:99px;top:12px;width:50px;height:11px;background:#fdfdfd;border:1px solid #ddd"></div><div style="position:absolute;left:25px;top:23px;width:116px;height:5px;background:#3a8a3a;"></div><div style="position:absolute;left:48px;top:23px;width:6px;height:5px;background:#e07020;border-radius:50%"></div><div style="position:absolute;left:25px;top:28px;width:116px;height:37px;background:linear-gradient(90deg,#d8f0c8 0,#b0e090 12%,#80d860 45%,#7ad858 70%,#a8e888);"></div><div style="position:absolute;left:28px;top:32px;width:11px;height:10px;background:#e06030;border-radius:50%"></div><div style="position:absolute;left:30px;top:42px;width:5px;height:21px;background:#f0f0f0;"></div><div style="position:absolute;left:41px;top:33px;width:29px;height:30px;background:linear-gradient(160deg,#a8d0e8,#6a7a3a 40%,#8a5a2a 60%,#4a6a3a);"></div><div style="position:absolute;left:86px;top:36px;width:50px;height:4px;background:#e8f8e8;"></div><div style="position:absolute;left:86px;top:43px;width:48px;height:3px;background:#c8f0c0;"></div><div style="position:absolute;left:90px;top:53px;width:44px;height:2px;background:#1a3a1a;"></div><div style="position:absolute;left:88px;top:57px;width:46px;height:2px;background:#1a3a1a;"></div><div style="position:absolute;left:142px;top:23px;width:40px;height:42px;background:linear-gradient(#c8e8f8,#90c8e8 35%,#b8c8d8 55%,#a0a0a0 75%,#c0c0c0);"></div><div style="position:absolute;left:148px;top:30px;width:28px;height:8px;background:#3a5ab0;border-radius:3px"></div><div style="position:absolute;left:154px;top:55px;width:22px;height:8px;background:#d02020;border-radius:3px"></div><div style="position:absolute;left:144px;top:57px;width:12px;height:6px;background:#a0a040;border-radius:2px"></div><div style="position:absolute;left:25px;top:69px;width:30px;height:1px;background:#888;"></div><div style="position:absolute;left:58px;top:69px;width:120px;height:1px;background:#e8a080;"></div><div style="position:absolute;left:25.0px;top:73.0px;width:25px;height:15px;background:linear-gradient(#e8f0e8 30%,#2a7a3a 35%);border-radius:1px"></div><div style="position:absolute;left:51.6px;top:73.0px;width:25px;height:15px;background:linear-gradient(135deg,#7a9a6a,#4a7a4a);border-radius:1px"></div><div style="position:absolute;left:78.2px;top:73.0px;width:25px;height:15px;background:linear-gradient(90deg,#6a6a3a,#a08a5a);border-radius:1px"></div><div style="position:absolute;left:104.80000000000001px;top:73.0px;width:25px;height:15px;background:linear-gradient(135deg,#b07040,#6a4a2a);border-radius:1px"></div><div style="position:absolute;left:131.4px;top:73.0px;width:25px;height:15px;background:linear-gradient(#8ab070,#5a8a4a);border-radius:1px"></div><div style="position:absolute;left:158.0px;top:73.0px;width:25px;height:15px;background:linear-gradient(#a0d0f0,#4a90b0);border-radius:1px"></div><div style="position:absolute;left:25.0px;top:89.5px;width:25px;height:15px;background:linear-gradient(135deg,#0a4a4a,#208080);border-radius:1px"></div><div style="position:absolute;left:51.6px;top:89.5px;width:25px;height:15px;background:linear-gradient(135deg,#8a6a6a,#b08a5a);border-radius:1px"></div><div style="position:absolute;left:78.2px;top:89.5px;width:25px;height:15px;background:linear-gradient(135deg,#b8d8e0,#7aa0b0);border-radius:1px"></div><div style="position:absolute;left:104.80000000000001px;top:89.5px;width:25px;height:15px;background:radial-gradient(#d07a30,#6a2a10);border-radius:1px"></div><div style="position:absolute;left:131.4px;top:89.5px;width:25px;height:15px;background:linear-gradient(135deg,#70c0a0,#3a9a6a);border-radius:1px"></div><div style="position:absolute;left:158.0px;top:89.5px;width:25px;height:15px;background:linear-gradient(135deg,#e090b0,#d0a040);border-radius:1px"></div><div style="position:absolute;left:25.0px;top:106.0px;width:25px;height:15px;background:linear-gradient(#7a7a8a,#4a4a5a);border-radius:1px"></div><div style="position:absolute;left:51.6px;top:106.0px;width:25px;height:15px;background:linear-gradient(#6aaa5a,#3a7a3a);border-radius:1px"></div><div style="position:absolute;left:78.2px;top:106.0px;width:25px;height:15px;background:linear-gradient(#c0a060,#7a6030);border-radius:1px"></div><div style="position:absolute;left:104.80000000000001px;top:106.0px;width:25px;height:15px;background:linear-gradient(#d8e0e8,#a0b0c0);border-radius:1px"></div><div style="position:absolute;left:131.4px;top:106.0px;width:25px;height:15px;background:radial-gradient(#6a5a4a,#3a2a2a);border-radius:1px"></div><div style="position:absolute;left:158.0px;top:106.0px;width:25px;height:15px;background:linear-gradient(#4a3a20,#2a2010);border-radius:1px"></div><div style="position:absolute;left:25.0px;top:122.5px;width:25px;height:15px;background:#9a7050;border-radius:1px"></div><div style="position:absolute;left:51.6px;top:122.5px;width:25px;height:15px;background:#8a6040;border-radius:1px"></div><div style="position:absolute;left:78.2px;top:122.5px;width:25px;height:15px;background:#8a6a5a;border-radius:1px"></div><div style="position:absolute;left:104.80000000000001px;top:122.5px;width:25px;height:15px;background:#c8d8c8;border-radius:1px"></div><div style="position:absolute;left:131.4px;top:122.5px;width:25px;height:15px;background:#b08a60;border-radius:1px"></div><div style="position:absolute;left:158.0px;top:122.5px;width:25px;height:15px;background:#7a8a7a;border-radius:1px"></div></div>
<svg style="position:absolute;left:888px;top:332px;width:16px;height:16px" viewBox="0 0 16 16"><rect x="2" y="5" width="12" height="10" rx="1" fill="#e04818"/><rect x="7" y="5" width="2.5" height="10" fill="#f4d040"/><rect x="2" y="5" width="12" height="2.5" fill="#f0a020"/><path d="M8,5 Q4,0 3,4 M8,5 Q12,0 13,4" stroke="#f4c030" stroke-width="1.5" fill="none"/></svg>
<div style="position:absolute;left:908px;top:333px;font-size:13px;line-height:15px;color:#111;white-space:nowrap">Prizee, c'est Cadeau !</div>
<div style="position:absolute;left:180px;top:374px;width:215px;height:137px;border-radius:5px;background:#e3e3e3"></div>
<div style="position:absolute;left:183px;top:377px;width:210px;height:132px;background:#fff"></div>
<div style="position:absolute;left:184px;top:378px;width:208px;height:130px;overflow:hidden"><div style="position:absolute;left:0px;top:0px;width:208px;height:130px;background:#6ea3de;"></div><div style="position:absolute;left:0px;top:0px;width:208px;height:9px;background:#fdfdfd;"></div><div style="position:absolute;left:22px;top:2px;font:bold 6px/7px 'Liberation Sans';color:#444">You<span style="background:#d82828;color:#fff;border-radius:1px">Tube</span></div><div style="position:absolute;left:58px;top:3px;width:40px;height:4px;background:#fff;border:1px solid #ddd"></div><div style="position:absolute;left:85px;top:3px;width:13px;height:4px;background:#e8e8e8;border:1px solid #bbb"></div><div style="position:absolute;left:96px;top:4px;width:10px;height:2px;background:#9ab;"></div><div style="position:absolute;left:108px;top:4px;width:14px;height:2px;background:#9ab;"></div><div style="position:absolute;left:128px;top:4px;width:8px;height:2px;background:#888;"></div><div style="position:absolute;left:141px;top:4px;width:12px;height:2px;background:#9ab;"></div><div style="position:absolute;left:25px;top:9px;width:159px;height:113px;background:#fff;"></div><div style="position:absolute;left:25px;top:10px;width:159px;height:10px;background:#eef0f8;"></div><div style="position:absolute;left:27px;top:11px;width:7px;height:8px;background:#e4e4e4;border:1px solid #bbb"></div><div style="position:absolute;left:37px;top:14px;width:22px;height:2px;background:#999;"></div><div style="position:absolute;left:60px;top:13px;width:12px;height:4px;background:#f0e050;"></div><div style="position:absolute;left:79px;top:14px;width:8px;height:2px;background:#5a6ad8;"></div><div style="position:absolute;left:92px;top:13px;width:21px;height:4px;background:#111;"></div><div style="position:absolute;left:116px;top:14px;width:11px;height:2px;background:#5a6ad8;"></div><div style="position:absolute;left:171px;top:13px;width:5px;height:4px;background:#222;"></div><div style="position:absolute;left:177px;top:14px;width:4px;height:2px;background:#333;"></div><div style="position:absolute;left:136px;top:23.5px;width:22px;height:4px;background:#fff;border:1px solid #bbb"></div><div style="position:absolute;left:160px;top:24px;width:12px;height:3px;background:#f0f0f0;"></div><div style="position:absolute;left:136px;top:30px;width:36px;height:1.5px;background:#5a6ad0;"></div><div style="position:absolute;left:136px;top:32.5px;width:8px;height:1px;background:#5a6ad0;"></div><div style="position:absolute;left:136px;top:35.5px;width:17px;height:5px;background:#6a5060;"></div><div style="position:absolute;left:155px;top:36.5px;width:13px;height:1.5px;background:#4a4ad0;"></div><div style="position:absolute;left:155px;top:39.5px;width:12px;height:1px;background:#5a5ad0;"></div><div style="position:absolute;left:155px;top:42.5px;width:14px;height:1px;background:#999;"></div><div style="position:absolute;left:136px;top:48.7px;width:17px;height:9px;background:#3a2a8a;"></div><div style="position:absolute;left:155px;top:49.7px;width:13px;height:1.5px;background:#4a4ad0;"></div><div style="position:absolute;left:155px;top:52.7px;width:12px;height:1px;background:#5a5ad0;"></div><div style="position:absolute;left:155px;top:55.7px;width:14px;height:1px;background:#999;"></div><div style="position:absolute;left:136px;top:61.9px;width:17px;height:9px;background:#4a3a7a;"></div><div style="position:absolute;left:155px;top:62.9px;width:13px;height:1.5px;background:#4a4ad0;"></div><div style="position:absolute;left:155px;top:65.9px;width:12px;height:1px;background:#5a5ad0;"></div><div style="position:absolute;left:155px;top:68.9px;width:14px;height:1px;background:#999;"></div><div style="position:absolute;left:136px;top:75.1px;width:17px;height:9px;background:#4a4a8a;"></div><div style="position:absolute;left:155px;top:76.1px;width:13px;height:1.5px;background:#4a4ad0;"></div><div style="position:absolute;left:155px;top:79.1px;width:12px;height:1px;background:#5a5ad0;"></div><div style="position:absolute;left:155px;top:82.1px;width:14px;height:1px;background:#999;"></div><div style="position:absolute;left:136px;top:88.3px;width:17px;height:9px;background:#1a1a1a;"></div><div style="position:absolute;left:155px;top:89.3px;width:13px;height:1.5px;background:#4a4ad0;"></div><div style="position:absolute;left:155px;top:92.3px;width:12px;height:1px;background:#5a5ad0;"></div><div style="position:absolute;left:155px;top:95.3px;width:14px;height:1px;background:#999;"></div><div style="position:absolute;left:136px;top:101.5px;width:17px;height:9px;background:#5a3ab0;"></div><div style="position:absolute;left:155px;top:102.5px;width:13px;height:1.5px;background:#4a4ad0;"></div><div style="position:absolute;left:155px;top:105.5px;width:12px;height:1px;background:#5a5ad0;"></div><div style="position:absolute;left:155px;top:108.5px;width:14px;height:1px;background:#999;"></div><div style="position:absolute;left:136px;top:114.69999999999999px;width:17px;height:9px;background:#7a6a3a;"></div><div style="position:absolute;left:155px;top:115.69999999999999px;width:13px;height:1.5px;background:#4a4ad0;"></div><div style="position:absolute;left:155px;top:118.69999999999999px;width:12px;height:1px;background:#5a5ad0;"></div><div style="position:absolute;left:155px;top:121.69999999999999px;width:14px;height:1px;background:#999;"></div><div style="position:absolute;left:178px;top:50px;width:2px;height:10px;background:#ccc;"></div><div style="position:absolute;left:134px;top:84.5px;width:28px;height:3px;background:#0a0a0a;"></div><div style="position:absolute;left:30px;top:88px;width:10px;height:1px;background:#777;"></div><div style="position:absolute;left:43px;top:88px;width:10px;height:1px;background:#999;"></div><div style="position:absolute;left:57px;top:88px;width:10px;height:1px;background:#999;"></div><div style="position:absolute;left:72px;top:88px;width:10px;height:1px;background:#999;"></div><div style="position:absolute;left:88px;top:88px;width:10px;height:1px;background:#999;"></div><div style="position:absolute;left:25px;top:93px;width:106px;height:28px;background:#eceefa;"></div><div style="position:absolute;left:28px;top:95.5px;width:51px;height:1.5px;background:#3a2ad0;"></div><div style="position:absolute;left:28px;top:99px;width:40px;height:1px;background:#888;"></div><div style="position:absolute;left:28px;top:103.0px;width:68px;height:1px;background:#8a8ab8;"></div><div style="position:absolute;left:28px;top:105.5px;width:68px;height:1px;background:#8a8ab8;"></div><div style="position:absolute;left:28px;top:108.0px;width:68px;height:1px;background:#8a8ab8;"></div><div style="position:absolute;left:28px;top:110px;width:42px;height:1px;background:#8a8ab8;"></div><div style="position:absolute;left:28px;top:114px;width:60px;height:1px;background:#5a5ad0;"></div><div style="position:absolute;left:116px;top:96px;width:15px;height:3px;background:#f6f6f6;border:1px solid #ccc"></div><div style="position:absolute;left:116px;top:108px;width:12px;height:1px;background:#999;"></div><div style="position:absolute;left:25px;top:122px;width:159px;height:8px;background:#f4f6fa;"></div><div style="position:absolute;left:28px;top:124px;width:15px;height:6px;background:#fff;border:1px solid #999"></div><div style="position:absolute;left:48px;top:124px;width:10px;height:1.5px;background:#666;"></div><div style="position:absolute;left:79px;top:125px;width:19px;height:2px;background:#555;"></div></div>
<svg style="position:absolute;left:183px;top:515px;width:16px;height:16px" viewBox="0 0 16 16"><text x="2.5" y="6.8" font-family="Liberation Sans" font-weight="bold" font-size="7" letter-spacing="-0.3" fill="#222">You</text><rect x="0.3" y="7.8" width="15.4" height="8" rx="2" fill="#d82020"/><text x="1" y="14.4" font-family="Liberation Sans" font-weight="bold" font-size="6.6" letter-spacing="-0.5" fill="#fff">Tube</text></svg>
<div style="position:absolute;left:203px;top:516px;font-size:13px;line-height:15px;color:#111;white-space:nowrap">YouTube - Chaîne de zeroD3VIL</div>
<div style="position:absolute;left:415px;top:374px;width:215px;height:137px;border-radius:5px;background:#e3e3e3"></div>
<div style="position:absolute;left:418px;top:377px;width:210px;height:132px;background:#fff"></div>
<div style="position:absolute;left:419px;top:378px;width:208px;height:130px;overflow:hidden"><div style="position:absolute;left:0px;top:0px;width:208px;height:130px;background:#1d1d20;"></div><div style="position:absolute;left:0px;top:0px;width:208px;height:130px;background:linear-gradient(rgba(255,255,255,0) 0,rgba(255,255,255,0) 44%,rgba(255,255,255,0.015) 46%,rgba(255,255,255,0.015) 58%,rgba(255,255,255,0) 60%);"></div></div>
<svg style="position:absolute;left:418px;top:515px;width:16px;height:16px" viewBox="0 0 16 16"><rect x="0.5" y="0.5" width="15" height="15" fill="#fff" stroke="#6a6a6a"/><path d="M1,11 L12.5,1 L15,1 L15,4 L1,13.5 Z" fill="#080808"/><path d="M1,13.5 L15,4 L15,7.8 L1,15 Z" fill="#2a64d0"/><path d="M1,13.5 L15,4 L15,5.2 L1,14.4 Z" fill="#b0dcff"/><path d="M1,15 L15,7.8 L15,11 L4.5,15 Z" fill="#080808"/></svg>
<div style="position:absolute;left:438px;top:516px;font-size:13px;line-height:15px;color:#111;white-space:nowrap">ESL: Home FR - France - Ele…</div>
<div style="position:absolute;left:650px;top:374px;width:215px;height:137px;border-radius:5px;background:#e3e3e3"></div>
<div style="position:absolute;left:653px;top:377px;width:210px;height:132px;background:#fff"></div>
<div style="position:absolute;left:654px;top:378px;width:208px;height:130px;overflow:hidden"><div style="position:absolute;left:0px;top:0px;width:208px;height:130px;background:#030303;"></div><div style="position:absolute;left:60px;top:50px;width:90px;height:80px;background:radial-gradient(ellipse,#1c0a12,rgba(0,0,0,0) 70%);"></div><div style="position:absolute;left:72px;top:2px;font:italic bold 16px/18px 'Liberation Serif';color:#eaeaea;letter-spacing:-1px">W<span style="font-size:12px;letter-spacing:-0.6px">we-universal</span></div><div style="position:absolute;left:80px;top:20px;width:45px;height:1px;background:#999;"></div><div style="position:absolute;left:74px;top:18px;width:12px;height:2px;background:#b02020;transform:rotate(-15deg)"></div><div style="position:absolute;left:19px;top:38px;width:114px;height:3px;background:#d8d8d8;"></div><div style="position:absolute;left:137px;top:43px;width:2.5px;height:87px;background:#f0f0f0;"></div><div style="position:absolute;left:22px;top:47px;width:8px;height:1px;background:#aaa;"></div><div style="position:absolute;left:19px;top:55px;width:52px;height:1px;background:#888;"></div><div style="position:absolute;left:19px;top:58px;width:120px;height:1px;background:#2a1a1a;"></div><div style="position:absolute;left:84px;top:62px;width:7px;height:3px;background:#ccc;"></div><div style="position:absolute;left:97px;top:62px;width:9px;height:2px;background:#8ac030;"></div><div style="position:absolute;left:109px;top:62px;width:21px;height:2px;background:#ccc;"></div><div style="position:absolute;left:22px;top:70px;width:12px;height:1px;background:#aaa;"></div><div style="position:absolute;left:22px;top:78px;width:9px;height:1px;background:#3a5aa0;"></div><div style="position:absolute;left:40px;top:78px;width:8px;height:1px;background:#888;"></div><div style="position:absolute;left:59px;top:85px;width:6px;height:2px;background:#c040c0;"></div><div style="position:absolute;left:59px;top:90px;width:2px;height:2px;background:#c040c0;"></div><div style="position:absolute;left:59px;top:94px;width:2px;height:2px;background:#c040c0;"></div><div style="position:absolute;left:19px;top:101px;width:116px;height:1px;background:#1a1a1a;"></div><div style="position:absolute;left:77px;top:105px;width:31px;height:3.5px;background:#f6f6f6;"></div><div style="position:absolute;left:80px;top:111px;width:31px;height:3.5px;background:#f6f6f6;"></div><div style="position:absolute;left:75px;top:117px;width:56px;height:3.5px;background:#f6f6f6;"></div><div style="position:absolute;left:50px;top:123px;width:89px;height:7px;background:#fbfbfb;"></div><div style="position:absolute;left:148px;top:45px;width:42px;height:4px;background:linear-gradient(90deg,#2a2a9a,#9a2a9a,#3a1a3a);filter:blur(0.6px)"></div><div style="position:absolute;left:147px;top:53px;width:38px;height:1px;background:#8a8a8a;"></div><div style="position:absolute;left:147px;top:58px;width:38px;height:1px;background:#8a8a8a;"></div><div style="position:absolute;left:147px;top:63px;width:38px;height:1px;background:#8a8a8a;"></div><div style="position:absolute;left:147px;top:68px;width:38px;height:1px;background:#8a8a8a;"></div><div style="position:absolute;left:147px;top:73px;width:38px;height:1px;background:#8a8a8a;"></div><div style="position:absolute;left:147px;top:78px;width:38px;height:1px;background:#8a8a8a;"></div><div style="position:absolute;left:147px;top:83px;width:38px;height:1px;background:#8a8a8a;"></div><div style="position:absolute;left:144px;top:96px;width:52px;height:5px;background:linear-gradient(90deg,#1a1a7a,#9a1a3a,#4a1a1a);filter:blur(0.6px)"></div><div style="position:absolute;left:147px;top:105px;width:32px;height:1px;background:#8a8a8a;"></div><div style="position:absolute;left:147px;top:110px;width:32px;height:1px;background:#8a8a8a;"></div><div style="position:absolute;left:147px;top:115px;width:32px;height:1px;background:#8a8a8a;"></div><div style="position:absolute;left:147px;top:120px;width:32px;height:1px;background:#8a8a8a;"></div><div style="position:absolute;left:147px;top:125px;width:32px;height:1px;background:#8a8a8a;"></div><div style="position:absolute;left:0px;top:89px;width:50px;height:41px;background:linear-gradient(#fff4e0,#f8d0a0 40%,#f0b070);"></div><div style="position:absolute;left:2px;top:92px;width:46px;height:5px;background:#e8702a;"></div><div style="position:absolute;left:17px;top:98px;width:29px;height:5px;background:#f07030;border-radius:2px"></div><div style="position:absolute;left:3px;top:100px;width:19px;height:30px;background:radial-gradient(ellipse 60% 45% at 50% 40%,#f0c8a8 60%,#6a3a1a 80%,#7a6a3a);"></div><div style="position:absolute;left:6px;top:120px;width:16px;height:10px;background:#7a7a3a;"></div><div style="position:absolute;left:23px;top:108px;width:24px;height:14px;background:linear-gradient(#d0e0b0,#a0c890);transform:rotate(-12deg)"></div><div style="position:absolute;left:34px;top:121px;width:13px;height:6px;background:#f07830;border-radius:2px"></div></div>
<svg style="position:absolute;left:653px;top:515px;width:16px;height:16px" viewBox="0 0 16 16"><defs><radialGradient id="eg" cx="0.4" cy="0.35" r="0.7"><stop offset="0" stop-color="#bde4f8"/><stop offset="0.6" stop-color="#2a7ab8"/><stop offset="1" stop-color="#0a3a6a"/></radialGradient></defs><circle cx="8" cy="8" r="7.5" fill="url(#eg)"/><path d="M3,6 Q6,4 8,6 Q7,9 10,10 Q12,12 9,14" stroke="#3a9a3a" stroke-width="2" fill="none"/></svg>
<div style="position:absolute;left:673px;top:516px;font-size:13px;line-height:15px;color:#111;white-space:nowrap">Show Us / Fr - WWE-Univers…</div>
<div style="position:absolute;left:885px;top:374px;width:215px;height:137px;border-radius:5px;background:#e3e3e3"></div>
<div style="position:absolute;left:888px;top:377px;width:210px;height:132px;background:#fff"></div>
<div style="position:absolute;left:889px;top:378px;width:208px;height:130px;overflow:hidden"><div style="position:absolute;left:0px;top:0px;width:208px;height:130px;background:#060505;"></div><div style="position:absolute;left:6px;top:9px;width:51px;height:39px;background:radial-gradient(ellipse 50% 60% at 55% 55%,#d0a080,rgba(0,0,0,0) 70%),linear-gradient(135deg,#d8d0c0 0,#a89080 30%,#3a3432 60%,#6a5a50);"></div><div style="position:absolute;left:14px;top:49px;width:36px;height:1px;background:#a8a8a8;"></div><div style="position:absolute;left:42px;top:52px;width:14px;height:1.5px;background:#e8c830;"></div><div style="position:absolute;left:8px;top:52px;width:25px;height:1px;background:#505050;"></div><div style="position:absolute;left:58px;top:9px;width:51px;height:39px;background:radial-gradient(ellipse 60% 40% at 50% 55%,#4a88c8,rgba(0,0,0,0) 75%),linear-gradient(#c8c8d0,#8a9098 50%,#5a5a60);"></div><div style="position:absolute;left:66px;top:49px;width:36px;height:1px;background:#a8a8a8;"></div><div style="position:absolute;left:94px;top:52px;width:14px;height:1.5px;background:#e8c830;"></div><div style="position:absolute;left:60px;top:52px;width:25px;height:1px;background:#505050;"></div><div style="position:absolute;left:110px;top:9px;width:51px;height:39px;background:radial-gradient(ellipse 55% 60% at 60% 45%,#d0a078,rgba(0,0,0,0) 70%),linear-gradient(90deg,#3a302a,#6a5a48 40%,#8a7060);"></div><div style="position:absolute;left:118px;top:49px;width:36px;height:1px;background:#a8a8a8;"></div><div style="position:absolute;left:146px;top:52px;width:14px;height:1.5px;background:#e8c830;"></div><div style="position:absolute;left:112px;top:52px;width:25px;height:1px;background:#505050;"></div><div style="position:absolute;left:6px;top:59px;width:51px;height:38px;background:radial-gradient(ellipse 30% 70% at 25% 50%,#e0c0a8,rgba(0,0,0,0) 80%),linear-gradient(90deg,#b8a090,#4a4448 50%,#2a3040);"></div><div style="position:absolute;left:14px;top:98px;width:36px;height:1px;background:#a8a8a8;"></div><div style="position:absolute;left:42px;top:101px;width:14px;height:1.5px;background:#e8c830;"></div><div style="position:absolute;left:8px;top:101px;width:25px;height:1px;background:#505050;"></div><div style="position:absolute;left:58px;top:59px;width:51px;height:38px;background:radial-gradient(ellipse 50% 60% at 45% 55%,#f0d8b8,rgba(0,0,0,0) 80%),linear-gradient(#c8c0b8,#b0a898);"></div><div style="position:absolute;left:66px;top:98px;width:36px;height:1px;background:#a8a8a8;"></div><div style="position:absolute;left:94px;top:101px;width:14px;height:1.5px;background:#e8c830;"></div><div style="position:absolute;left:60px;top:101px;width:25px;height:1px;background:#505050;"></div><div style="position:absolute;left:110px;top:59px;width:51px;height:38px;background:radial-gradient(ellipse 40% 60% at 40% 60%,#e8c090,rgba(0,0,0,0) 80%),linear-gradient(90deg,#d8c8b0,#8a6030 60%,#6a4a28);"></div><div style="position:absolute;left:118px;top:98px;width:36px;height:1px;background:#a8a8a8;"></div><div style="position:absolute;left:146px;top:101px;width:14px;height:1.5px;background:#e8c830;"></div><div style="position:absolute;left:112px;top:101px;width:25px;height:1px;background:#505050;"></div><div style="position:absolute;left:6px;top:108px;width:51px;height:22px;background:linear-gradient(#a88070,#d8b8a0 60%,#8a7060);"></div><div style="position:absolute;left:58px;top:108px;width:51px;height:22px;background:linear-gradient(#e8e8e0 0,#e8e8e0 15%,#2a4a3a 15%,#3a5a48 60%,#d8c890 75%,#f0f0e8);"></div><div style="position:absolute;left:110px;top:108px;width:51px;height:22px;background:#0c0b0b;"></div><div style="position:absolute;left:14px;top:2px;width:36px;height:1px;background:#a8a8a8;"></div><div style="position:absolute;left:42px;top:5px;width:14px;height:1.5px;background:#e8c830;"></div><div style="position:absolute;left:8px;top:5px;width:25px;height:1px;background:#505050;"></div><div style="position:absolute;left:66px;top:2px;width:36px;height:1px;background:#a8a8a8;"></div><div style="position:absolute;left:94px;top:5px;width:14px;height:1.5px;background:#e8c830;"></div><div style="position:absolute;left:60px;top:5px;width:25px;height:1px;background:#505050;"></div><div style="position:absolute;left:118px;top:2px;width:36px;height:1px;background:#a8a8a8;"></div><div style="position:absolute;left:146px;top:5px;width:14px;height:1.5px;background:#e8c830;"></div><div style="position:absolute;left:112px;top:5px;width:25px;height:1px;background:#505050;"></div><div style="position:absolute;left:165px;top:6px;width:36px;height:4px;background:#c01818;"></div><div style="position:absolute;left:165px;top:12px;width:38px;height:1px;background:#3a4a3a;"></div><div style="position:absolute;left:168px;top:27px;width:30px;height:3px;background:#6a6a6a;"></div><div style="position:absolute;left:165px;top:35.0px;width:14px;height:1.5px;background:#8a1010;"></div><div style="position:absolute;left:165px;top:40.9px;width:21px;height:1.5px;background:#8a1010;"></div><div style="position:absolute;left:165px;top:46.8px;width:16px;height:1.5px;background:#8a1010;"></div><div style="position:absolute;left:165px;top:52.7px;width:23px;height:1.5px;background:#8a1010;"></div><div style="position:absolute;left:165px;top:58.6px;width:18px;height:1.5px;background:#8a1010;"></div><div style="position:absolute;left:165px;top:64.5px;width:25px;height:1.5px;background:#8a1010;"></div><div style="position:absolute;left:165px;top:70.4px;width:20px;height:1.5px;background:#8a1010;"></div><div style="position:absolute;left:165px;top:76.30000000000001px;width:15px;height:1.5px;background:#8a1010;"></div><div style="position:absolute;left:165px;top:82.2px;width:22px;height:1.5px;background:#8a1010;"></div><div style="position:absolute;left:165px;top:88.1px;width:17px;height:1.5px;background:#8a1010;"></div><div style="position:absolute;left:165px;top:94.0px;width:24px;height:1.5px;background:#8a1010;"></div><div style="position:absolute;left:165px;top:99.9px;width:19px;height:1.5px;background:#8a1010;"></div><div style="position:absolute;left:165px;top:105.80000000000001px;width:14px;height:1.5px;background:#8a1010;"></div><div style="position:absolute;left:165px;top:111.7px;width:21px;height:1.5px;background:#8a1010;"></div><div style="position:absolute;left:165px;top:117.60000000000001px;width:16px;height:1.5px;background:#8a1010;"></div><div style="position:absolute;left:165px;top:123.5px;width:23px;height:1.5px;background:#8a1010;"></div></div>
<svg style="position:absolute;left:888px;top:515px;width:16px;height:16px" viewBox="0 0 16 16"><rect width="16" height="16" fill="#c41a1a"/><rect x="0.5" y="0.5" width="15" height="15" fill="none" stroke="#e87070" stroke-width="0.8"/><text x="0.5" y="13" font-family="Liberation Sans" font-style="italic" font-weight="bold" font-size="11" letter-spacing="-1.2" fill="#fff">jizz</text></svg>
<div style="position:absolute;left:908px;top:516px;font-size:13px;line-height:15px;color:#111;white-space:nowrap">Porn Tube, You Porn, Free P…</div>
<div style="position:absolute;left:180px;top:563px;font-size:16px;line-height:18px;color:#111;white-space:nowrap;letter-spacing:-0.2px">Récemment fermés</div>
<div style="position:absolute;left:322px;top:571px;width:778px;height:1px;background:#e2e2e2"></div>
<svg style="position:absolute;left:180px;top:595px;width:16px;height:16px" viewBox="0 0 16 16"><path d="M3.2,1.2 L13.2,1.2 L14.8,15.6 L1.4,15.6 Z" fill="#d8b440" stroke="#a88a30" stroke-width="0.7" stroke-linejoin="round"/><path d="M5.5,1.2 Q8,0 10.5,1.2" stroke="#a88a30" stroke-width="0.8" fill="none"/><path d="M2,15.2 Q2.5,8.5 8.2,7.2 Q14,8.5 14.4,15.2 Z" fill="#fbf2c0"/><ellipse cx="6.3" cy="4" rx="0.9" ry="1.2" fill="#6a4a10"/><ellipse cx="11.2" cy="4.3" rx="1" ry="0.9" fill="#6a4a10"/><ellipse cx="8.3" cy="11.2" rx="1" ry="1.4" fill="#3a3020"/></svg>
<div style="position:absolute;left:198px;top:596px;font-size:12.6px;line-height:14px;white-space:nowrap"><span style="color:#3a5ea8;text-decoration:underline">20110620135</span><span style="color:#8a8a8a">…</span></div>
<svg style="position:absolute;left:314px;top:595px;width:16px;height:16px" viewBox="0 0 16 16"><path d="M3.2,1.2 L13.2,1.2 L14.8,15.6 L1.4,15.6 Z" fill="#d8b440" stroke="#a88a30" stroke-width="0.7" stroke-linejoin="round"/><path d="M5.5,1.2 Q8,0 10.5,1.2" stroke="#a88a30" stroke-width="0.8" fill="none"/><path d="M2,15.2 Q2.5,8.5 8.2,7.2 Q14,8.5 14.4,15.2 Z" fill="#fbf2c0"/><ellipse cx="6.3" cy="4" rx="0.9" ry="1.2" fill="#6a4a10"/><ellipse cx="11.2" cy="4.3" rx="1" ry="0.9" fill="#6a4a10"/><ellipse cx="8.3" cy="11.2" rx="1" ry="1.4" fill="#3a3020"/></svg>
<div style="position:absolute;left:332px;top:596px;font-size:12.6px;line-height:14px;white-space:nowrap"><span style="color:#3a5ea8;text-decoration:underline">20110620140</span><span style="color:#8a8a8a">…</span></div>
<svg style="position:absolute;left:448px;top:595px;width:16px;height:16px" viewBox="0 0 16 16"><path d="M3.2,1.2 L13.2,1.2 L14.8,15.6 L1.4,15.6 Z" fill="#d8b440" stroke="#a88a30" stroke-width="0.7" stroke-linejoin="round"/><path d="M5.5,1.2 Q8,0 10.5,1.2" stroke="#a88a30" stroke-width="0.8" fill="none"/><path d="M2,15.2 Q2.5,8.5 8.2,7.2 Q14,8.5 14.4,15.2 Z" fill="#fbf2c0"/><ellipse cx="6.3" cy="4" rx="0.9" ry="1.2" fill="#6a4a10"/><ellipse cx="11.2" cy="4.3" rx="1" ry="0.9" fill="#6a4a10"/><ellipse cx="8.3" cy="11.2" rx="1" ry="1.4" fill="#3a3020"/></svg>
<div style="position:absolute;left:466px;top:596px;font-size:12.6px;line-height:14px;white-space:nowrap"><span style="color:#3a5ea8;text-decoration:underline">20110620134</span><span style="color:#8a8a8a">…</span></div>
<svg style="position:absolute;left:582px;top:595px;width:16px;height:16px" viewBox="0 0 16 16"><path d="M3.2,1.2 L13.2,1.2 L14.8,15.6 L1.4,15.6 Z" fill="#d8b440" stroke="#a88a30" stroke-width="0.7" stroke-linejoin="round"/><path d="M5.5,1.2 Q8,0 10.5,1.2" stroke="#a88a30" stroke-width="0.8" fill="none"/><path d="M2,15.2 Q2.5,8.5 8.2,7.2 Q14,8.5 14.4,15.2 Z" fill="#fbf2c0"/><ellipse cx="6.3" cy="4" rx="0.9" ry="1.2" fill="#6a4a10"/><ellipse cx="11.2" cy="4.3" rx="1" ry="0.9" fill="#6a4a10"/><ellipse cx="8.3" cy="11.2" rx="1" ry="1.4" fill="#3a3020"/></svg>
<div style="position:absolute;left:600px;top:596px;font-size:12.6px;line-height:14px;white-space:nowrap"><span style="color:#3a5ea8;text-decoration:underline">20110620150</span><span style="color:#8a8a8a">…</span></div>
<svg style="position:absolute;left:716px;top:595px;width:16px;height:16px" viewBox="0 0 16 16"><path d="M3.2,1.2 L13.2,1.2 L14.8,15.6 L1.4,15.6 Z" fill="#d8b440" stroke="#a88a30" stroke-width="0.7" stroke-linejoin="round"/><path d="M5.5,1.2 Q8,0 10.5,1.2" stroke="#a88a30" stroke-width="0.8" fill="none"/><path d="M2,15.2 Q2.5,8.5 8.2,7.2 Q14,8.5 14.4,15.2 Z" fill="#fbf2c0"/><ellipse cx="6.3" cy="4" rx="0.9" ry="1.2" fill="#6a4a10"/><ellipse cx="11.2" cy="4.3" rx="1" ry="0.9" fill="#6a4a10"/><ellipse cx="8.3" cy="11.2" rx="1" ry="1.4" fill="#3a3020"/></svg>
<div style="position:absolute;left:734px;top:596px;font-size:12.6px;line-height:14px;white-space:nowrap"><span style="color:#3a5ea8;text-decoration:underline">20110620172</span><span style="color:#8a8a8a">…</span></div>
<svg style="position:absolute;left:850px;top:595px;width:16px;height:16px" viewBox="0 0 16 16"><rect width="16" height="16" fill="#c41a1a"/><rect x="0.5" y="0.5" width="15" height="15" fill="none" stroke="#e87070" stroke-width="0.8"/><text x="0.5" y="13" font-family="Liberation Sans" font-style="italic" font-weight="bold" font-size="11" letter-spacing="-1.2" fill="#fff">jizz</text></svg>
<div style="position:absolute;left:868px;top:596px;font-size:12.6px;line-height:14px;white-space:nowrap"><span style="color:#3a5ea8;text-decoration:underline">Porn Tube, Yo</span><span style="color:#8a8a8a">…</span></div>
<svg style="position:absolute;left:984px;top:595px;width:16px;height:16px" viewBox="0 0 16 16"><ellipse cx="6.5" cy="9" rx="5" ry="5.5" fill="#e8c8a8" stroke="#a88060" stroke-width="0.8"/><path d="M3,5 Q6,2 10,4" stroke="#6a4a2a" stroke-width="1.5" fill="none"/><circle cx="12.5" cy="8" r="2.3" fill="#fff" stroke="#a03030" stroke-width="1"/><circle cx="12.5" cy="8" r="0.9" fill="#a03030"/></svg>
<div style="position:absolute;left:1002px;top:596px;font-size:12.6px;line-height:14px;white-space:nowrap"><span style="color:#3a5ea8;text-decoration:underline">Can't Be Unse</span><span style="color:#8a8a8a">…</span></div>
<svg style="position:absolute;left:9px;top:955px" width="30" height="30" viewBox="0 0 30 30"><circle cx="15" cy="15" r="14" fill="#e0362c"/><path d="M15,15 L27.1,8 A14,14 0 0 1 15,29 Z" fill="#f6c21a"/><path d="M15,15 L15,29 A14,14 0 0 1 2.9,8 Z" fill="#3a9a3a"/><circle cx="15" cy="15" r="6.6" fill="#fff"/><circle cx="15" cy="15" r="5.2" fill="#3a7ad8"/></svg>
<div style="position:absolute;left:42px;top:951px;font-size:25px;line-height:32px;color:#787878;letter-spacing:-0.4px">chrome</div>
<div style="position:absolute;left:0;top:994px;width:1280px;height:30px;background:linear-gradient(#3e3a3a 0,#3e3a3a 1px,#aaa2a2 1px,#aaa2a2 2px,#7c7272 2px,#5a5050 9px,#463c3c 14px,#1c0505 14px,#160303 30px)"></div>
<svg style="position:absolute;left:6px;top:988px" width="46" height="36" viewBox="0 0 46 36"><defs><radialGradient id="orb" cx="0.5" cy="0.3" r="0.65"><stop offset="0" stop-color="#b8d4e8"/><stop offset="0.45" stop-color="#3a6890"/><stop offset="1" stop-color="#0c2438"/></radialGradient><radialGradient id="orbg" cx="0.5" cy="0.5" r="0.5"><stop offset="0" stop-color="#50d0ff" stop-opacity="0.9"/><stop offset="1" stop-color="#2090d0" stop-opacity="0"/></radialGradient><clipPath id="oc"><circle cx="23" cy="23" r="20"/></clipPath></defs><circle cx="23" cy="23" r="20.5" fill="url(#orb)" stroke="#1a2a3a" stroke-width="1.2"/><ellipse cx="23" cy="40" rx="17" ry="11" fill="url(#orbg)" clip-path="url(#oc)"/><path d="M14,10.5 Q18.5,8 23.5,10 L22.5,19.5 Q18,17.5 13.5,20 Z" fill="#f0602a"/><path d="M24.5,10.5 Q29,12 34,9.5 L33,19.5 Q28.5,21.5 23.5,20 Z" fill="#88c040"/><path d="M13.5,21 Q18,18.5 22.5,20.5 L21.5,30.5 Q17,28.5 12.5,31 Z" fill="#40a8f0"/><path d="M23.5,21 Q28,22.5 33,20.5 L32,30.5 Q27.5,32.5 22.5,31 Z" fill="#f8c430"/></svg>
<svg style="position:absolute;left:62px;top:1000px" width="100" height="18"><rect x="2" y="1" width="18" height="15" fill="#2a5aa8" stroke="#9ac0f0"/><rect x="5" y="4" width="9" height="5" fill="#dfe8f4"/><rect x="8" y="8" width="9" height="5" fill="#b0c8e8"/><rect x="26" y="1" width="20" height="14" fill="#3a6ac8" stroke="#a0b8d8"/><rect x="28" y="3" width="16" height="10" fill="#2a4a90"/><rect x="50" y="0" width="17" height="17" rx="1" fill="#3a9ad8" stroke="#8ad0f8"/><rect x="53" y="3" width="11" height="11" fill="#f8a020"/><path d="M56,5 L62,8.5 L56,12 Z" fill="#fff"/><path d="M82,2 L85,5 L82,8 M86,2 L89,5 L86,8" stroke="#eee" stroke-width="1.6" fill="none"/></svg>
<div style="position:absolute;left:162px;top:996px;width:157px;height:27px;border:1px solid #8a8686;border-radius:3px;background:linear-gradient(#4a4646,#363232 45%,#120808 52%,#0c0404)"></div>
<svg style="position:absolute;left:171px;top:1001px" width="16" height="16" viewBox="0 0 30 30"><circle cx="15" cy="15" r="14" fill="#e0362c"/><path d="M15,15 L27.1,8 A14,14 0 0 1 15,29 Z" fill="#f6c21a"/><path d="M15,15 L15,29 A14,14 0 0 1 2.9,8 Z" fill="#3a9a3a"/><circle cx="15" cy="15" r="6.6" fill="#fff"/><circle cx="15" cy="15" r="5.2" fill="#3a7ad8"/></svg>
<div style="position:absolute;left:191px;top:1002px;font-size:12px;line-height:14px;color:#f4f4f4;white-space:nowrap">Nouvel onglet - Go...</div>
<div style="position:absolute;left:1037px;top:1001px;font-size:12px;line-height:14px;color:#e0e0e0">FR</div>
<svg style="position:absolute;left:1064px;top:997px" width="180" height="24"><path d="M9,7 L5,11.5 L9,16" stroke="#eee" stroke-width="2" fill="none"/><circle cx="24" cy="9" r="4" fill="none" stroke="#eee" stroke-width="2"/><path d="M16,14 L22,11" stroke="#eee" stroke-width="2.5"/><circle cx="18" cy="15" r="2.5" fill="#eee"/><rect x="35" y="4" width="11" height="14" fill="#5aa0e0" stroke="#e8a030"/><rect x="37" y="7" width="7" height="8" fill="#bfe0f8"/><rect x="52" y="4" width="14" height="15" fill="#eee"/><path d="M52,14 L66,6 L66,9 L52,17 Z" fill="#111"/><path d="M52,11 L66,4 L66,6 L52,13 Z" fill="#3a7ad0"/><circle cx="75" cy="9" r="3" fill="#8ac0f0"/><path d="M71,18 Q72,12 76,12 Q80,12 80,18 Z" fill="#6aa0e0"/><rect x="77" y="13" width="6" height="5" fill="#30c030"/><circle cx="96" cy="12" r="7" fill="#9a9a9a" stroke="#ddd"/><circle cx="96" cy="12" r="5" fill="#333"/><path d="M96,12 L100,8" stroke="#e04040" stroke-width="1.5"/><rect x="108" y="5" width="6" height="14" fill="#c83020"/><rect x="113" y="4" width="7" height="8" fill="#3a8a3a"/><rect x="113" y="12" width="7" height="7" fill="#c84020"/><rect x="108" y="11" width="5" height="8" fill="#5a9a3a"/><rect x="138" y="5" width="12" height="9" fill="#3a6ac8" stroke="#cde"/><rect x="134" y="8" width="12" height="9" fill="#4a8ad8" stroke="#cde"/><circle cx="144" cy="17" r="3" fill="#2a9a4a"/><path d="M155,9 L158,9 L162,5 L162,19 L158,15 L155,15 Z" fill="#ddd"/><path d="M165,8 Q167,12 165,16 M168,6 Q171,12 168,18" stroke="#7ac050" stroke-width="1.3" fill="none"/></svg>
<div style="position:absolute;left:1240px;top:1002px;font-size:12px;line-height:14px;color:#f0f0f0;white-space:nowrap;letter-spacing:-0.5px">17:47</div>
</body></html>
